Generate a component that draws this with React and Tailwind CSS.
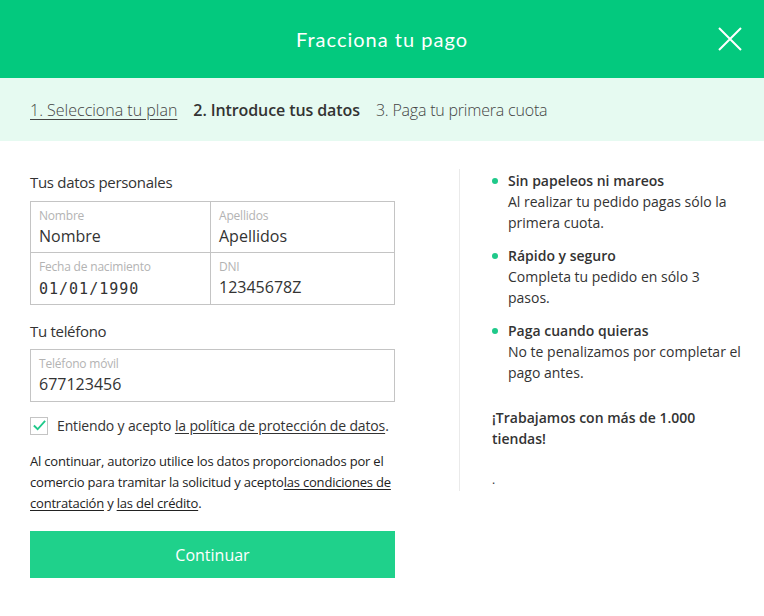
import React, { useState } from "react";

const sans = { fontFamily: '"Open Sans", "Noto Sans", sans-serif' };

function Field({ label, value, mono, className }) {
  return (
    <div className={"flex flex-col px-2 pt-[6px] h-[51px] " + (className || "")}>
      <span className="text-[12px] leading-[16px] text-[#b3b3b3] tracking-[-0.2px]">{label}</span>
      <span
        className={
          mono
            ? "text-[15px] leading-[24px] text-[#333] tracking-[1px] mt-[2px]"
            : "text-[16px] leading-[24px] text-[#333]"
        }
        style={mono ? { fontFamily: '"DejaVu Sans Mono", monospace' } : undefined}
      >
        {value}
      </span>
    </div>
  );
}

function Point({ title, lines }) {
  return (
    <li className="flex gap-[10px]">
      <span className="mt-[8px] w-[6px] h-[6px] rounded-full bg-[#1fc98a] shrink-0" />
      <div className="text-[14px] leading-[21px] text-[#333] whitespace-nowrap">
        <p className="font-semibold">{title}</p>
        {lines.map((l) => (
          <p key={l}>{l}</p>
        ))}
      </div>
    </li>
  );
}

export default function App() {
  const [accepted, setAccepted] = useState(true);

  return (
    <div className="w-[764px] h-[616px] bg-white" style={sans}>
      <div className="h-[78px] bg-[#03c97e] flex items-center justify-center relative">
        <h1
          className="text-white text-[20px] tracking-[1px]"
          style={{ fontFamily: '"Lato", sans-serif' }}
        >
          Fracciona tu pago
        </h1>
        <button className="absolute right-[22px] top-[27px] w-[24px] h-[24px]">
          <svg viewBox="0 0 24 24" width="24" height="24" fill="none" stroke="#fff" strokeWidth="2">
            <path d="M1 1 L23 23 M23 1 L1 23" />
          </svg>
        </button>
      </div>

      <div className="h-[63px] bg-[#e6faf1] flex items-center gap-4 px-[30px] text-[16px] text-[#444]">
        <span className="underline underline-offset-[3px] font-light">1. Selecciona tu plan</span>
        <span className="font-semibold text-[#333] tracking-[-0.1px]">2. Introduce tus datos</span>
        <span className="font-light tracking-[-0.2px]">3. Paga tu primera cuota</span>
      </div>

      <div className="flex px-[30px] pt-[30px]">
        <div className="w-[365px] shrink-0">
          <h2 className="text-[15px] leading-[22px] text-[#333] tracking-[-0.3px]">Tus datos personales</h2>
          <div className="mt-[8px] border border-[#c4c4c4] grid grid-cols-[180px_1fr]">
            <Field label="Nombre" value="Nombre" className="border-r border-b border-[#c4c4c4]" />
            <Field label="Apellidos" value="Apellidos" className="border-b border-[#c4c4c4]" />
            <Field label="Fecha de nacimiento" value="01/01/1990" mono className="border-r border-[#c4c4c4]" />
            <Field label="DNI" value="12345678Z" />
          </div>

          <h2 className="mt-[15px] text-[15px] leading-[22px] text-[#333] tracking-[-0.3px]">Tu teléfono</h2>
          <div className="mt-[7px] border border-[#c4c4c4]">
            <Field label="Teléfono móvil" value="677123456" />
          </div>

          <label className="mt-[13px] flex items-center gap-[9px] text-[14px] text-[#333] tracking-[-0.15px] whitespace-nowrap">
            <input
              type="checkbox"
              className="sr-only"
              checked={accepted}
              onChange={() => setAccepted(!accepted)}
            />
            <span className="w-[18px] h-[18px] border border-[#c4c4c4] flex items-center justify-center shrink-0">
              {accepted && (
                <svg viewBox="0 0 16 16" width="15" height="15" fill="none" stroke="#1fc98a" strokeWidth="2">
                  <path d="M2 8 L6 12 L14 3" />
                </svg>
              )}
            </span>
            <span>
              Entiendo y acepto <span className="underline underline-offset-2">la política de protección de datos</span>.
            </span>
          </label>

          <p className="mt-[15px] text-[13px] leading-[21px] text-[#222] tracking-[-0.2px]">
            Al continuar, autorizo utilice los datos proporcionados por el comercio para tramitar la solicitud y acepto
            <span className="underline underline-offset-2">las condiciones de contratación</span> y{" "}
            <span className="underline underline-offset-2">las del crédito</span>.
          </p>

          <button className="mt-[17px] w-full h-[47px] bg-[#1fd18b] text-white text-[16px]">Continuar</button>
        </div>

        <div className="ml-[64px] mt-[-2px] h-[322px] border-l border-[#eaeaea] pl-[32px] w-[305px] shrink-0">
          <ul className="flex flex-col gap-[12px] pt-[1px]">
            <Point title="Sin papeleos ni mareos" lines={["Al realizar tu pedido pagas sólo la", "primera cuota."]} />
            <Point title="Rápido y seguro" lines={["Completa tu pedido en sólo 3", "pasos."]} />
            <Point
              title="Paga cuando quieras"
              lines={["No te penalizamos por completar el", "pago antes."]}
            />
          </ul>
          <p className="mt-[24px] text-[14px] leading-[21px] font-semibold text-[#333] w-[230px]">
            ¡Trabajamos con más de 1.000 tiendas!
          </p>
          <p className="mt-[22px] text-[12px] text-[#333]">.</p>
        </div>
      </div>
    </div>
  );
}
